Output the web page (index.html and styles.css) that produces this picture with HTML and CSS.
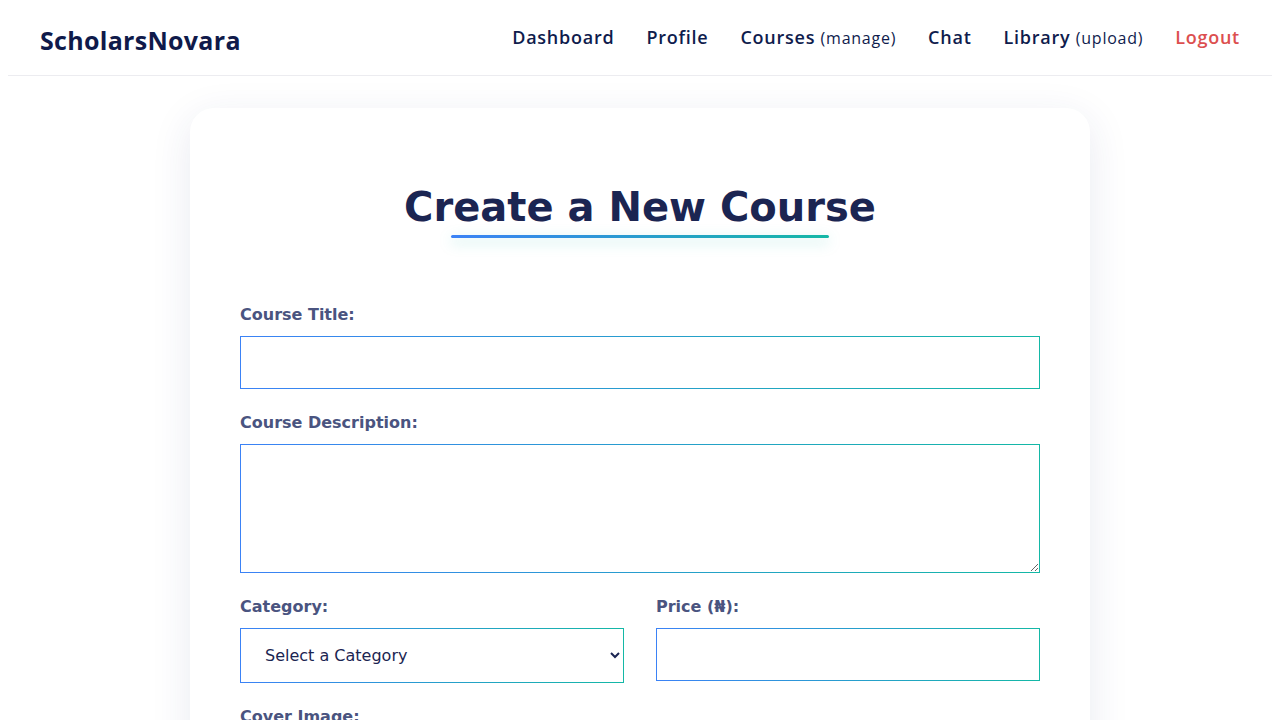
FILE: index.html
```html
<!DOCTYPE html>
<html lang="en">
<head>
<meta charset="utf-8">
<title>Create a New Course - ScholarsNovara</title>
<link rel="stylesheet" href="styles.css">
</head>
<body>
<header class="site-header">
  <a class="logo" href="#">ScholarsNovara</a>
  <nav class="main-nav">
    <a href="#">Dashboard</a>
    <a href="#">Profile</a>
    <a href="#">Courses <small>(manage)</small></a>
    <a href="#">Chat</a>
    <a href="#">Library <small>(upload)</small></a>
    <a href="#" class="logout">Logout</a>
  </nav>
</header>
<main class="page">
  <section class="card">
    <h1 class="card-title"><span>Create a New Course</span></h1>
    <form class="course-form">
      <div class="form-group">
        <label for="title">Course Title:</label>
        <input id="title" type="text" class="field">
      </div>
      <div class="form-group">
        <label for="desc">Course Description:</label>
        <textarea id="desc" class="field area"></textarea>
      </div>
      <div class="form-row">
        <div class="form-group">
          <label for="cat">Category:</label>
          <select id="cat" class="field select">
            <option>Select a Category</option>
          </select>
        </div>
        <div class="form-group">
          <label for="price">Price (₦):</label>
          <input id="price" type="number" class="field">
        </div>
      </div>
      <div class="form-group">
        <label for="cover">Cover Image:</label>
        <input id="cover" type="file" class="field">
      </div>
    </form>
  </section>
</main>
</body>
</html>
```
FILE: styles.css
```css
body {
  margin: 8px;
  background: #ffffff;
  font-family: "DejaVu Sans", sans-serif;
  color: #1b2552;
}

.site-header {
  display: flex;
  align-items: center;
  justify-content: space-between;
  height: 67px;
  padding: 0 32px;
  border-bottom: 1px solid #ececf0;
}

.logo {
  font-family: "Open Sans", sans-serif;
  font-weight: 700;
  font-size: 25px;
  color: #0f1a4a;
  text-decoration: none;
  letter-spacing: 0.3px;
  margin-top: -3px;
}

.main-nav {
  display: flex;
  gap: 32px;
  padding-bottom: 10px;
}

.main-nav a {
  font-family: "Open Sans", sans-serif;
  font-weight: 600;
  font-size: 18px;
  color: #0f1c4d;
  text-decoration: none;
  letter-spacing: 0.75px;
}

.main-nav small {
  font-size: 16px;
  font-weight: 500;
}

.main-nav .logout {
  color: #dc4f4f;
}

.page {
  display: flex;
  justify-content: center;
  padding-top: 32px;
}

.card {
  width: 900px;
  box-sizing: border-box;
  padding: 50px;
  background: #ffffff;
  border-radius: 24px;
  box-shadow: 0 10px 40px rgba(40, 50, 120, 0.1);
}

.card-title {
  margin: 26px 0 67px;
  text-align: center;
  font-size: 40px;
  font-weight: 700;
  line-height: normal;
  color: #1b2552;
}

.card-title span {
  position: relative;
  display: inline-block;
  padding-bottom: 8px;
}

.card-title span::after {
  content: "";
  position: absolute;
  left: 10%;
  width: 80%;
  bottom: 0;
  height: 3px;
  border-radius: 2px;
  background: linear-gradient(to right, #3b82f6, #14b8a6);
  box-shadow: 0 4px 14px rgba(20, 184, 166, 0.35);
}

.form-group {
  margin-bottom: 24px;
}

.form-group label {
  display: block;
  margin-bottom: 12px;
  font-size: 16px;
  font-weight: 700;
  color: #4a5480;
}

.field {
  display: block;
  width: 100%;
  box-sizing: border-box;
  padding: 16px;
  font-family: "DejaVu Sans", sans-serif;
  font-size: 16px;
  color: #1b2552;
  background: #ffffff;
  border: 1px solid;
  border-image: linear-gradient(to right, #3b82f6, #14b8a6) 1;
  border-radius: 0;
  outline: none;
}

.area {
  height: 129px;
  resize: vertical;
}

.select {
  height: 55px;
  padding: 0 16px 0 20px;
}

.form-row {
  display: grid;
  grid-template-columns: 1fr 1fr;
  gap: 32px;
  align-items: start;
}
```
